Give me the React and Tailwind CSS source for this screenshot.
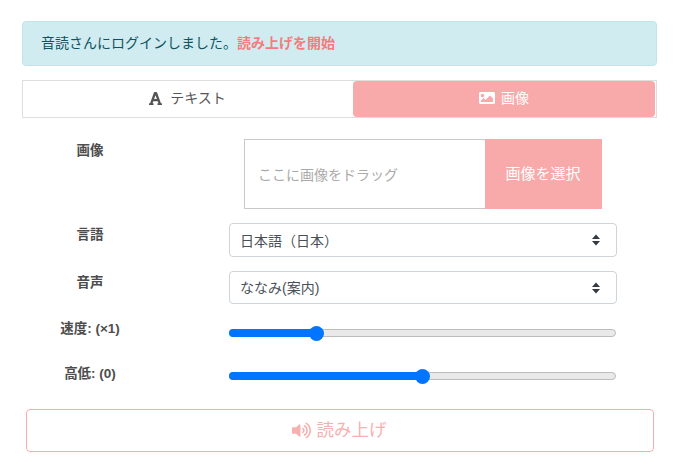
import React from "react";
import { FaFont, FaImage, FaVolumeUp } from "react-icons/fa";

const Chevrons = () => (
  <svg width="10" height="14" viewBox="0 0 10 14" className="shrink-0">
    <path d="M5 1.5 L9 6 H1 Z M1 8 H9 L5 12.5 Z" fill="#343a40" />
  </svg>
);

const Select = ({ label, h }) => (
  <div className={`w-[388px] ${h} flex items-center justify-between pl-[10px] pr-[15px] border border-[#ced4da] rounded-[4px] text-[14px] text-[#495057] bg-white`}>
    <span className="pt-[2px]">{label}</span>
    <Chevrons />
  </div>
);

const Slider = ({ pct }) => (
  <div className="relative w-[387px] h-[8px] rounded-full bg-[#e9e9e9] border border-[#bdbdbd]">
    <div className="h-[8px] -mt-px -ml-px rounded-full bg-[#0075ff]" style={{ width: `${pct}%` }} />
    <div className="absolute -top-[4px] w-[15px] h-[15px] rounded-full bg-[#0075ff]" style={{ left: `calc(${pct}% - 8px)` }} />
  </div>
);

const Row = ({ label, className, children, labelClass }) => (
  <div className={`flex ${className}`}>
    <div className={`w-[136px] text-center text-[13.5px] leading-[20px] font-bold text-[#4d4d4d] ${labelClass}`}>{label}</div>
    <div className="ml-[71px]">{children}</div>
  </div>
);

export default function App() {
  return (
    <div
      className="w-[674px] h-[458px] overflow-hidden bg-white px-[22px] pt-[21px] text-[#4d4d4d]"
      style={{ fontFamily: '"Liberation Sans", "Noto Sans CJK JP", sans-serif' }}
    >
      <div className="w-[635px] h-[45px] flex items-center pl-[18px] bg-[#d1ecf1] border border-[#bee5eb] rounded-[4px] text-[14px] text-[#0c5460]">
        <span>音読さんにログインしました。</span>
        <span className="font-bold text-[#f47c7c]">読み上げを開始</span>
      </div>

      <div className="mt-[14px] w-[635px] h-[38px] flex border border-[#dedede] text-[14px]">
        <div className="w-[330px] flex items-center justify-center gap-[7px] pb-[2px] pr-[2px] text-[#555]">
          <FaFont size={15} />
          <span>テキスト</span>
        </div>
        <div className="flex-1 flex items-center justify-center gap-[6px] pb-[2px] bg-[#f8a9a9] rounded-[4px] text-white mr-px">
          <FaImage size={16} />
          <span>画像</span>
        </div>
      </div>

      <Row label="画像" className="mt-[21px]" labelClass="pt-[2px]">
        <div className="ml-[15px] w-[358px] h-[70px] flex border border-[#c9c9c9] text-[14px]">
          <div className="flex-1 flex items-center pl-[13px] pt-[2px] text-[#aaaaaa]">ここに画像をドラッグ</div>
          <div className="w-[117px] -my-px -mr-px flex items-center justify-center pr-[1px] bg-[#f8a9a9] text-white text-[15px]">画像を選択</div>
        </div>
      </Row>

      <Row label="言語" className="mt-[14px]" labelClass="pt-[2px]">
        <Select label="日本語（日本）" h="h-[34px]" />
      </Row>

      <Row label="音声" className="mt-[14px]" labelClass="pt-[2px]">
        <Select label="ななみ(案内)" h="h-[33px]" />
      </Row>

      <Row label="速度: (×1)" className="mt-[15px]" labelClass="">
        <div className="pt-[10px]"><Slider pct={22.5} /></div>
      </Row>

      <Row label="高低: (0)" className="mt-[24px]" labelClass="pt-[1px]">
        <div className="pt-[9px]"><Slider pct={50} /></div>
      </Row>

      <div className="mt-[25px] ml-[4px] w-[628px] h-[43px] flex items-center justify-center gap-[6px] pr-[2px] border border-[#f4aeb2] rounded-[4px] text-[#f7b0b0] text-[17.5px]">
        <FaVolumeUp size={19} />
        <span>読み上げ</span>
      </div>
    </div>
  );
}
